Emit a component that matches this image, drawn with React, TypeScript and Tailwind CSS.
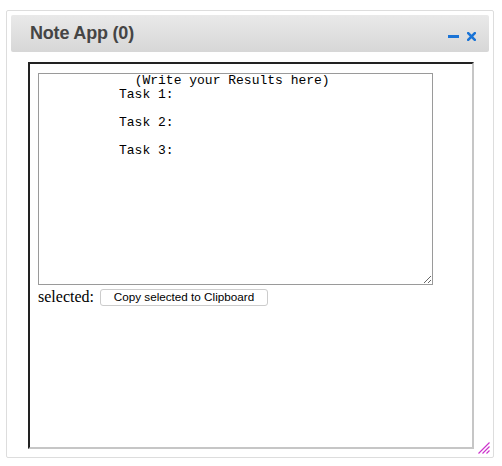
import React from 'react';

const initialNotes = `            (Write your Results here)
          Task 1:

          Task 2:

          Task 3:`;

const ResizeGrip: React.FC = () => (
  <svg width="12" height="12" viewBox="0 0 12 12" className="absolute right-[3px] bottom-[3px]">
    <path d="M0.5 11.5 L11.5 0.5 M4.5 11.5 L11.5 4.5 M8.5 11.5 L11.5 8.5" stroke="#cc33cc" strokeWidth="1.2" />
  </svg>
);

const NoteApp: React.FC = () => {
  const [notes, setNotes] = React.useState(initialNotes);

  return (
    <div className="relative ml-[6px] mt-[10px] w-[488px] h-[448px] border border-[#dddddd] rounded-[2px] bg-white p-[4px]">
      <div className="flex items-center justify-between h-[37px] pl-[19px] pr-[13px] rounded-[2px] bg-gradient-to-b from-[#e9e9e9] to-[#d7d7d7]">
        <h2 className="text-[18px] font-bold text-[#454545] font-['Liberation_Sans',Arial,sans-serif] tracking-[-0.2px]">
          Note App (0)
        </h2>
        <div className="flex items-center gap-[8px] text-[#1b74d6] mt-[6px]">
          <svg width="11" height="4" viewBox="0 0 11 4">
            <rect x="0" y="0" width="11" height="3" fill="currentColor" />
          </svg>
          <svg width="9" height="9" viewBox="0 0 9 9">
            <path d="M1.2 1.2 L7.8 7.8 M7.8 1.2 L1.2 7.8" stroke="currentColor" strokeWidth="2.6" strokeLinecap="square" />
          </svg>
        </div>
      </div>

      <div className="ml-[17px] mt-[10px] w-[446px] h-[387px] border-2 border-t-[#222222] border-l-[#222222] border-r-[#c6c6c6] border-b-[#c6c6c6] pl-[8px] pt-[9px]">
        <textarea
          value={notes}
          onChange={(e) => setNotes(e.target.value)}
          className="block w-[395px] h-[212px] border border-[#9a9a9a] px-[2px] pt-0 pb-[2px] text-[13px] leading-[14px] text-black font-['Liberation_Mono','Courier_New',monospace] outline-none resize"
        />
        <div className="flex items-center gap-[6px] mt-0">
          <span className="text-[16px] text-black font-['Liberation_Serif','Times_New_Roman',serif]">selected:</span>
          <button className="w-[168px] h-[17px] border border-[#cccccc] rounded-[3px] bg-white text-[11.7px] leading-none text-black font-['Liberation_Sans',Arial,sans-serif]">
            Copy selected to Clipboard
          </button>
        </div>
      </div>

      <ResizeGrip />
    </div>
  );
};

export default function App() {
  return (
    <div className="w-[502px] h-[466px] bg-white overflow-hidden">
      <NoteApp />
    </div>
  );
}
